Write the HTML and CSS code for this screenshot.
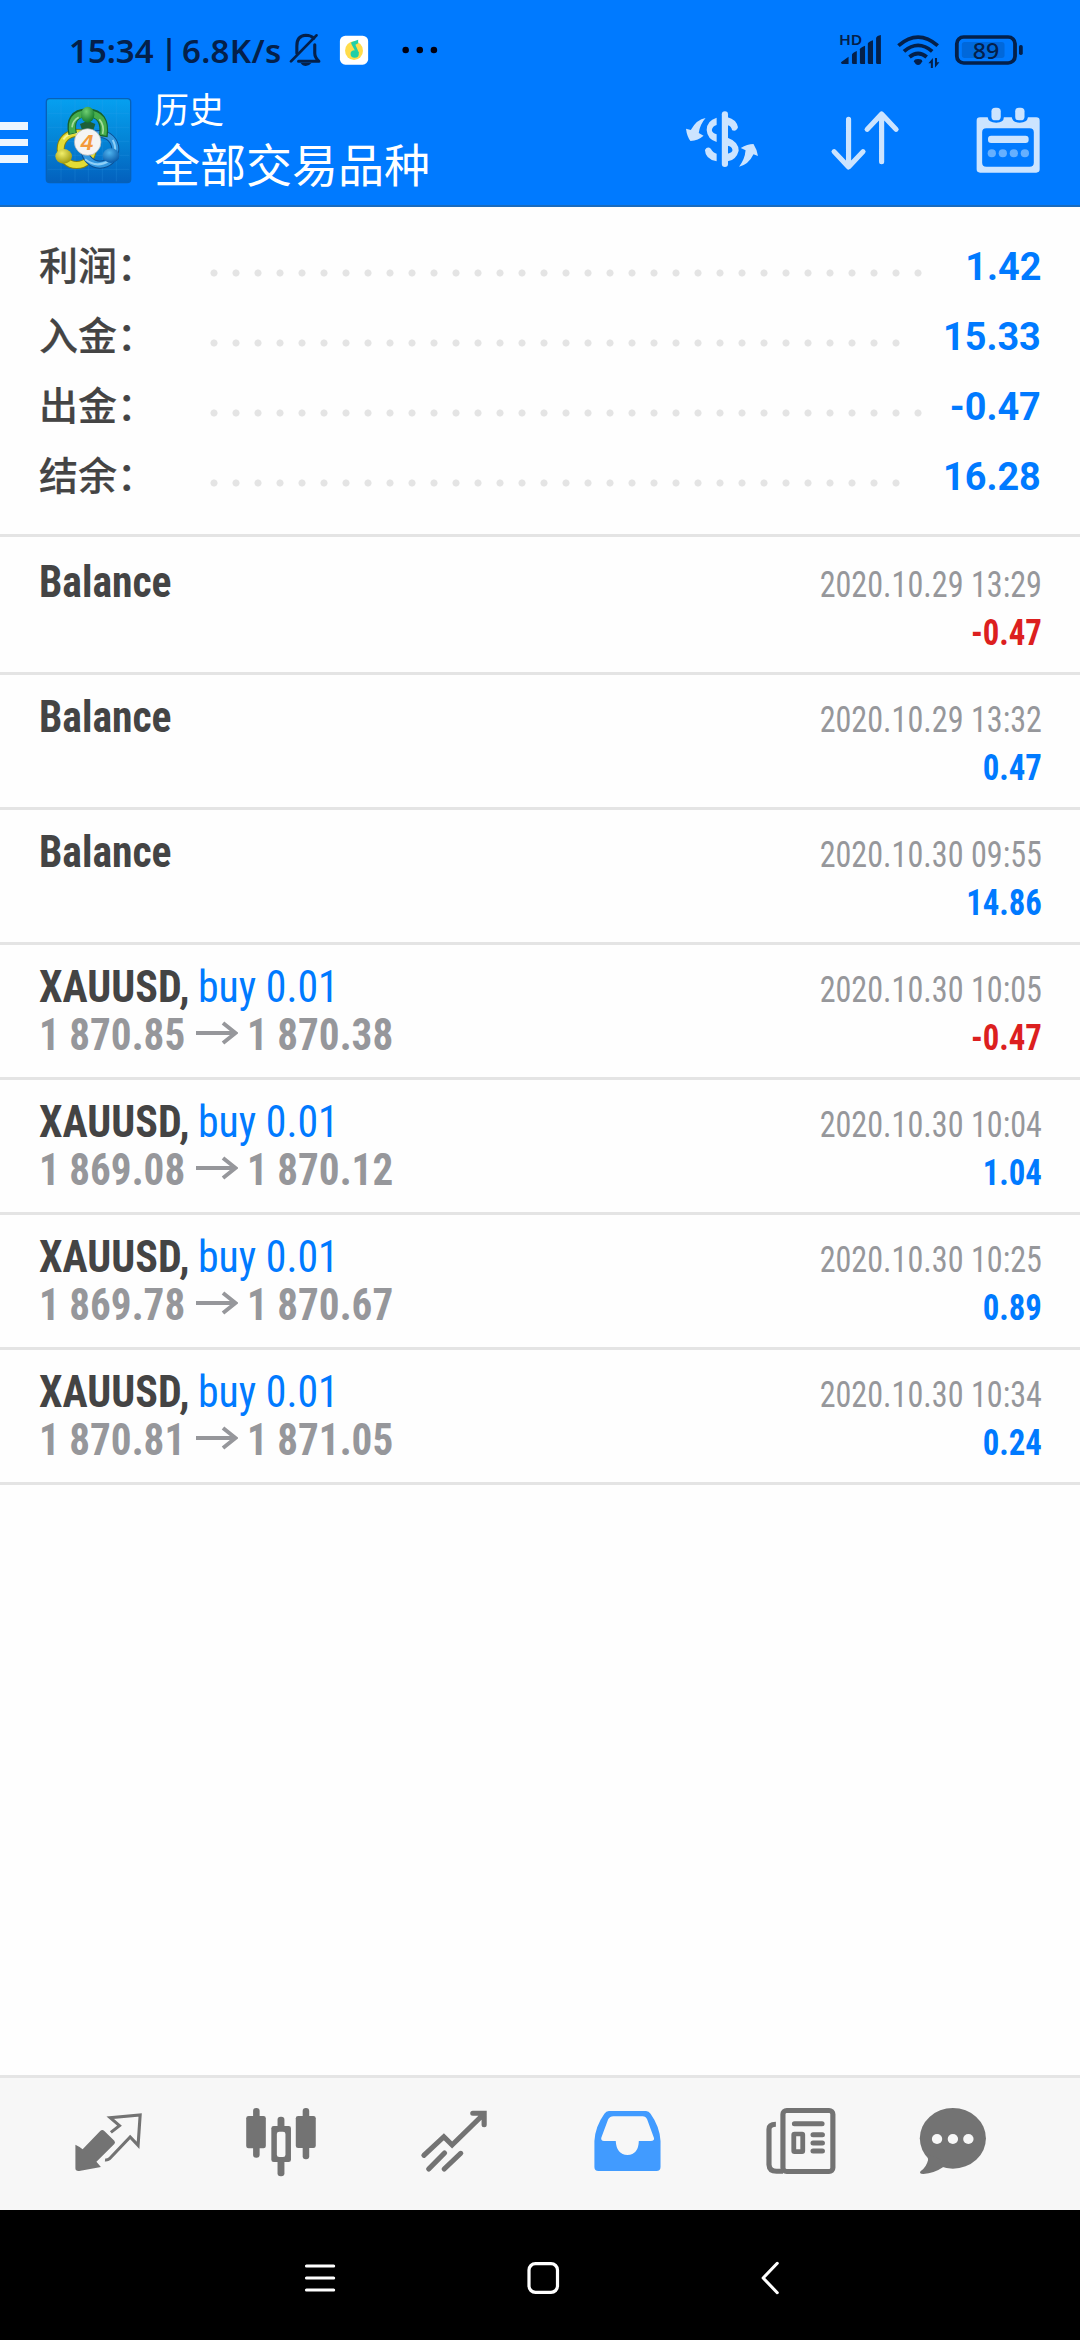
FILE: index.html
```html
<!DOCTYPE html>
<html lang="zh-CN">
<head>
<meta charset="utf-8">
<title>历史</title>
<link rel="stylesheet" href="styles.css">
</head>
<body>
<div class="screen">
  <header class="header">
    <div class="status">
      <div class="status-text"><span class="clock">15:34</span><span class="bar">|</span><span class="rate">6.8K/s</span></div>
      <svg class="status-left" viewBox="827.6 90 464.6 120" preserveAspectRatio="none">
        <g fill="none" stroke="#04204a" stroke-width="9" stroke-linecap="round" stroke-linejoin="round">
          <path d="M862 160V138Q862 107 888 106Q903 106 911 115"/>
          <path d="M845 184L919 106" stroke-width="8"/>
          <path d="M867 184H926Q914 172 914 160V134"/>
        </g>
        <path d="M873 189H904Q898 198 888 198Q878 198 873 189Z" fill="#04204a"/>
        <rect x="987" y="107" width="82" height="87" rx="16" fill="#fff"/>
        <ellipse cx="1028" cy="152" rx="26" ry="28" fill="#ffdc4a"/>
        <ellipse cx="1030" cy="162" rx="12" ry="11" fill="#1fcfa8"/>
        <path d="M1020 127L1040 119V130L1032 134L1042 158L1036 162L1020 131Z" fill="#1fcfa8"/>
        <g fill="#001"><ellipse cx="1178" cy="150" rx="9.500" ry="10"/><ellipse cx="1219" cy="150" rx="9.500" ry="10"/><ellipse cx="1260" cy="150" rx="9.500" ry="10"/></g>
      </svg>
      <svg class="status-right" viewBox="856.7 90 566.3 120" preserveAspectRatio="none">
        <g fill="#04204a">
          <text class="hd" x="868" y="135" textLength="68" lengthAdjust="spacingAndGlyphs">HD</text>
          <path d="M874 187L896 170V192H878Q874 192 874 187Z"/>
          <path d="M906 164Q906 160 920 153V192H910Q906 192 906 188Z"/>
          <path d="M929 148Q929 143 944 137V192H933Q929 192 929 188Z"/>
          <path d="M952 131Q953 126 967 121V192H956Q952 192 952 188Z"/>
          <path d="M976 114Q978 107 990 105V192H980Q976 192 976 188Z"/>
          <path d="M1098 177Q1110 177 1110 184Q1106 195 1098 195Q1090 195 1086 184Q1087 177 1098 177Z"/>
          <path d="M1128 190L1141 174V204H1135V190ZM1147 174H1153V187H1160L1147 203Z"/>
          <rect x="1391" y="135" width="11" height="30" rx="5"/>
        </g>
        <g fill="none" stroke="#04204a" stroke-width="11">
          <path d="M1041 137Q1098 86 1155 137"/>
          <path d="M1057 154Q1098 118 1139 154"/>
          <path d="M1073 171Q1098 150 1123 171"/>
          <rect x="1210.500" y="111" width="169" height="78" rx="20"/>
        </g>
        <rect x="1225" y="126" width="124" height="48" rx="8" fill="#0068db"/>
        <text class="batt" x="1257" y="176" textLength="77" lengthAdjust="spacingAndGlyphs" fill="#04204a">89</text>
      </svg>
    </div>
    <div class="appbar">
      <div class="burger"><i></i><i></i><i></i></div>
      <svg class="logo" viewBox="45 51 261 261">
        <defs>
          <linearGradient id="sky" x1="0" y1="0" x2="0" y2="1"><stop offset="0" stop-color="#06a0f0"/><stop offset=".5" stop-color="#0484d6"/><stop offset="1" stop-color="#0360bd"/></linearGradient>
          <radialGradient id="gr" cx=".4" cy=".3" r=".7"><stop offset="0" stop-color="#6fcf72"/><stop offset="1" stop-color="#137a2d"/></radialGradient>
          <radialGradient id="ye" cx=".4" cy=".3" r=".7"><stop offset="0" stop-color="#f1ee6a"/><stop offset="1" stop-color="#a09a10"/></radialGradient>
          <radialGradient id="bl" cx=".4" cy=".3" r=".7"><stop offset="0" stop-color="#4fb4ef"/><stop offset="1" stop-color="#0a5aa8"/></radialGradient>
        </defs>
        <rect x="49" y="56" width="253" height="252" rx="10" fill="url(#sky)" stroke="#0761b8" stroke-width="4"/>
        <path d="M93 60V304M135 60V304M175 60V304M217 60V304M259 60V304M53 100H298M53 142H298M53 184H298M53 226H298M53 268H298" stroke="#3aa6ea" stroke-opacity=".3" stroke-width="2"/>
        <g fill="none">
          <circle cx="140" cy="207" r="48" stroke="#85800f" stroke-width="24"/>
          <circle cx="140" cy="207" r="48" stroke="#e3dc35" stroke-width="18"/>
          <path d="M100 178Q120 152 150 162" stroke="#f7f490" stroke-width="6"/>
          <circle cx="210" cy="208" r="46" stroke="#0b4f93" stroke-width="24"/>
          <circle cx="210" cy="208" r="46" stroke="#3498e0" stroke-width="18"/>
          <path d="M165 238Q200 266 238 242M248 180Q257 196 255 210" stroke="#8fd0f7" stroke-width="6"/>
          <path d="M128 162Q114 100 172 98Q230 100 220 170" stroke="#17632a" stroke-width="26"/>
          <path d="M128 160Q116 102 172 100Q230 102 220 166" stroke="#46ad4c" stroke-width="19"/>
          <path d="M126 142Q128 122 146 112M208 118Q224 136 218 162" stroke="#a4dc9c" stroke-width="5"/>
        </g>
        <path d="M150 132L173 122L196 132L190 150H156Z" fill="#1d5f38"/>
        <ellipse cx="173" cy="104" rx="20" ry="24" fill="url(#gr)"/>
        <ellipse cx="101" cy="229" rx="25" ry="22" fill="url(#ye)"/>
        <ellipse cx="243" cy="227" rx="25" ry="22" fill="url(#bl)"/>
        <circle cx="173" cy="186" r="40" fill="#f4f4f4" stroke="#a9adb0" stroke-width="2"/>
        <text class="four" x="171" y="210" text-anchor="middle">4</text>
      </svg>
      <div class="titles"><div class="title">历史</div><div class="subtitle">全部交易品种</div></div>
      <div class="actions">
        <svg viewBox="412.4 294 232.3 240" preserveAspectRatio="none" fill="#cce4ff">
          <rect x="528" y="334" width="18" height="167" rx="9"/>
          <path d="M513 353Q484 362 484 390Q486 418 513 426V403Q499 398 499 390Q501 378 513 375Z"/>
          <path d="M479 450Q480 478 513 484V461Q502 458 496 446Q486 438 479 450Z"/>
          <path d="M545 352Q570 358 575 382Q570 396 558 391Q555 378 545 376Z"/>
          <path d="M545 413Q577 425 577 452Q570 480 545 484V461Q559 458 559 450Q557 438 545 437Z"/>
          <path d="M481 354Q455 358 438 390L424 386Q427 410 437 423Q460 421 475 407L461 399Q465 372 481 354Z"/>
          <path d="M578 500Q595 478 597 451L583 444Q602 432 620 432Q631 450 633 468L620 463Q605 495 578 500Z"/>
        </svg>
        <svg viewBox="827.6 294 232.3 240" preserveAspectRatio="none" fill="none" stroke="#cce4ff" stroke-width="15" stroke-linecap="round" stroke-linejoin="round">
          <path d="M896 358V500M854 455L896 501L938 455M992 485V343M950 388L992 342L1034 388"/>
        </svg>
        <svg viewBox="1242.9 294 232.3 240" preserveAspectRatio="none" fill="#cce4ff">
          <path fill-rule="evenodd" d="M1278 352H1300Q1302 368 1325 368Q1347 368 1347 352H1370Q1372 368 1393 368Q1415 368 1417 352H1441Q1451 352 1451 362V508Q1451 518 1441 518H1278Q1268 518 1268 508V362Q1268 352 1278 352ZM1296 385Q1284 385 1284 397V488Q1284 500 1296 500H1422Q1434 500 1434 488V397Q1434 385 1422 385Z"/>
          <rect x="1311" y="323" width="27" height="38" rx="11"/><rect x="1380" y="323" width="27" height="38" rx="11"/>
          <rect x="1301" y="407" width="118" height="22" rx="9"/>
          <g fill="#66b0ff"><circle cx="1312" cy="460" r="12"/><circle cx="1344" cy="460" r="12"/><circle cx="1376" cy="460" r="12"/><circle cx="1408" cy="460" r="12"/></g>
        </svg>
      </div>
    </div>
  </header>

  <section class="summary">
    <div class="sum-row"><span class="label">利润：</span><span class="dots"></span><span class="amount">1.42</span></div>
    <div class="sum-row"><span class="label">入金：</span><span class="dots short"></span><span class="amount">15.33</span></div>
    <div class="sum-row"><span class="label">出金：</span><span class="dots"></span><span class="amount">-0.47</span></div>
    <div class="sum-row"><span class="label">结余：</span><span class="dots short"></span><span class="amount">16.28</span></div>
  </section>

  <main class="list">
    <div class="item"><div class="left"><div class="line"><b class="op">Balance</b></div></div><div class="right"><div class="date">2020.10.29 13:29</div><div class="value loss">-0.47</div></div></div>
    <div class="item"><div class="left"><div class="line"><b class="op">Balance</b></div></div><div class="right"><div class="date">2020.10.29 13:32</div><div class="value">0.47</div></div></div>
    <div class="item"><div class="left"><div class="line"><b class="op">Balance</b></div></div><div class="right"><div class="date">2020.10.30 09:55</div><div class="value">14.86</div></div></div>
    <div class="item"><div class="left"><div class="line"><b class="symbol">XAUUSD,</b><span class="side">buy 0.01</span></div><div class="line prices"><span class="price">1 870.85</span><svg class="arrow" viewBox="0 0 42 24"><path d="M0 12H40M27 2L39.500 12L27 22"/></svg><span class="price">1 870.38</span></div></div><div class="right"><div class="date">2020.10.30 10:05</div><div class="value loss">-0.47</div></div></div>
    <div class="item"><div class="left"><div class="line"><b class="symbol">XAUUSD,</b><span class="side">buy 0.01</span></div><div class="line prices"><span class="price">1 869.08</span><svg class="arrow" viewBox="0 0 42 24"><path d="M0 12H40M27 2L39.500 12L27 22"/></svg><span class="price">1 870.12</span></div></div><div class="right"><div class="date">2020.10.30 10:04</div><div class="value">1.04</div></div></div>
    <div class="item"><div class="left"><div class="line"><b class="symbol">XAUUSD,</b><span class="side">buy 0.01</span></div><div class="line prices"><span class="price">1 869.78</span><svg class="arrow" viewBox="0 0 42 24"><path d="M0 12H40M27 2L39.500 12L27 22"/></svg><span class="price">1 870.67</span></div></div><div class="right"><div class="date">2020.10.30 10:25</div><div class="value">0.89</div></div></div>
    <div class="item"><div class="left"><div class="line"><b class="symbol">XAUUSD,</b><span class="side">buy 0.01</span></div><div class="line prices"><span class="price">1 870.81</span><svg class="arrow" viewBox="0 0 42 24"><path d="M0 12H40M27 2L39.500 12L27 22"/></svg><span class="price">1 871.05</span></div></div><div class="right"><div class="date">2020.10.30 10:34</div><div class="value">0.24</div></div></div>
  </main>

  <nav class="tabs">
    <svg viewBox="197.5 126 232.3 240" preserveAspectRatio="none">
      <path d="M219 254Q230 259 240 268L291 213Q297 207 303 213L332 242Q336 247 332 252L280 305L293 321L230 333Q219 334 219 325Z" fill="#737373"/>
      <path d="M322 217L347 197L320 173L407 165L401 256L378 231L318 296Q313 301 305 300" fill="none" stroke="#737373" stroke-width="9" stroke-linejoin="miter"/>
    </svg>
    <svg viewBox="699.9 126 232.3 240" preserveAspectRatio="none" fill="#737373">
      <rect x="735" y="144" width="19" height="149" rx="9"/><rect x="715" y="168" width="57" height="97" rx="7"/>
      <rect x="879" y="144" width="19" height="154" rx="9"/><rect x="859" y="168" width="58" height="96" rx="7"/>
      <rect x="806" y="170" width="20" height="179" rx="9"/><rect x="788" y="198" width="57" height="108" rx="7"/>
      <rect x="804" y="215" width="25" height="76" rx="7" fill="#f7f7f7"/>
    </svg>
    <svg viewBox="1202.3 126 232.3 240" preserveAspectRatio="none" fill="none" stroke="#737373" stroke-width="15" stroke-linecap="round">
      <path d="M1231 286L1289 230L1313 255L1405 162M1373 160H1406V194M1245 327L1291 279M1290 327L1338 280"/>
    </svg>
    <svg viewBox="136.5 126 232.3 240" preserveAspectRatio="none">
      <path fill="#419bff" fill-rule="evenodd" d="M200 153H308Q316 153 321 161Q348 200 350 243V321Q350 333 338 333H170Q158 333 158 321V243Q160 200 187 161Q192 153 200 153ZM213 169Q203 169 198 178L178 233Q176 242 186 243H220Q222 284 254 285Q286 284 287 243H322Q333 242 331 234L311 178Q307 169 298 169Z"/>
    </svg>
    <svg viewBox="638.9 126 232.3 240" preserveAspectRatio="none" fill="none" stroke="#737373" stroke-width="15">
      <rect x="705.500" y="151.500" width="145" height="183" rx="11"/>
      <path d="M685 193Q665 193 665 208V314Q666 334 687 334H706"/>
      <rect x="737" y="222" width="26" height="53" rx="2" stroke-width="14"/>
      <path d="M739 191H819M793 224H820M793 249H820M793 273H820" stroke-linecap="round"/>
    </svg>
    <svg class="last" viewBox="1083.2 126 232.3 240" preserveAspectRatio="none">
      <g fill="#737373"><ellipse cx="1199" cy="235" rx="96" ry="91"/><path d="M1120 280Q1127 290 1127 300Q1122 322 1105 334Q1100 342 1113 342Q1145 340 1170 322L1190 310Z"/></g>
      <g fill="#f7f7f7"><circle cx="1153" cy="237" r="15"/><circle cx="1199" cy="237" r="15"/><circle cx="1244" cy="237" r="15"/></g>
    </svg>
  </nav>

  <footer class="sysnav">
    <svg viewBox="871.2 594 116.2 120" preserveAspectRatio="none"><path d="M890 618H969M890 654H969M890 690H969"/></svg>
    <svg viewBox="523 2258 40 40"><rect class="thin" x="529" y="2263.600" width="28.500" height="28.800" rx="6.500"/></svg>
    <svg viewBox="598.2 594 116.2 120" preserveAspectRatio="none"><path d="M689 610L648 654L689 698"/></svg>
  </footer>
</div>
</body>
</html>
```
FILE: styles.css
```css
* { box-sizing: border-box; }
body { margin: 0; background: #fff; }
svg { display: block; flex: none; }

.screen {
  width: 1080px;
  height: 2340px;
  display: flex;
  flex-direction: column;
  overflow: hidden;
  background: #fefefe;
  font-family: Roboto, "Noto Sans CJK SC", sans-serif;
}

/* header */
.header {
  flex: none;
  height: 207px;
  background: #007aff;
  border-bottom: 2px solid #1a6bbd;
}
.status {
  height: 90px;
  display: flex;
  padding: 30px 50px 0 69px;
}
.status-text {
  width: 216px;
  display: flex;
  font: 600 33px/42px "Noto Sans", sans-serif;
  color: #04204a;
  white-space: nowrap;
}
.clock { width: 91px; }
.bar { width: 22px; }
.rate { letter-spacing: .3px; }
.status-left { width: 160px; height: 40px; }
.status-right { width: 195px; height: 40px; margin-left: auto; }
.hd { font: 600 44px "Noto Sans", sans-serif; }
.batt { font: 500 67px "Noto Sans", sans-serif; }
.four { font: italic 700 68px "Liberation Sans", sans-serif; fill: #f39a3c; }

.appbar { display: flex; height: 115px; }
.burger {
  width: 28px;
  margin-right: 17px;
  padding-top: 32px;
  display: flex;
  flex-direction: column;
  gap: 9px;
}
.burger i { height: 7.600px; background: #ecf6ff; }
.logo { width: 87px; height: 87px; margin-top: 7px; }
.titles {
  margin-left: 22px;
  color: #fff;
  font-family: "Noto Sans CJK SC", sans-serif;
  font-weight: 400;
  white-space: nowrap;
}
.title { font-size: 35px; line-height: 40px; margin-top: -2px; }
.subtitle { font-size: 46px; line-height: 56px; margin-top: 6px; }
.actions {
  margin-left: auto;
  padding: 8px 32px 0 0;
  display: flex;
  gap: 63px;
}
.actions svg { width: 80px; height: 80px; }

/* account summary */
.summary {
  flex: none;
  height: 330px;
  padding: 25px 39px 0;
  border-bottom: 3px solid #e4e4e4;
}
.sum-row {
  height: 70px;
  display: flex;
  align-items: center;
  font-size: 39px;
  line-height: 70px;
}
.label {
  width: 163.500px;
  align-self: flex-start;
  line-height: 62px;
  color: #444;
  font-family: "Noto Sans CJK SC", sans-serif;
  font-weight: 500;
  -webkit-text-stroke: .2px #444;
}
.dots {
  width: 726px;
  height: 8px;
  margin-top: 12px;
  background: radial-gradient(circle, #e4e4e4 3.200px, transparent 3.900px) 0 0 / 22px 8px repeat-x;
}
.dots.short { width: 704px; }
.amount {
  margin-left: auto;
  font-weight: 700;
  color: #007aff;
  transform: scaleX(.97);
  transform-origin: right;
}

/* history */
.list { flex: 1; padding-top: 3px; }
.item {
  height: 135px;
  display: flex;
  justify-content: space-between;
  padding: 0 38px 0 39px;
  border-bottom: 3px solid #e4e4e4;
  white-space: nowrap;
  font-stretch: 75%;
}
.left { padding-top: 18px; font-size: 44px; line-height: 48px; color: #444; }
.line { height: 48px; display: flex; }
.op, .symbol, .side, .price { transform-origin: left; }
.op { transform: scaleX(.945); }
.symbol { width: 158.500px; transform: scaleX(.955); }
.side { color: #007aff; transform: scaleX(.95); }
.prices { color: #96979b; font-weight: 700; }
.price { width: 157px; transform: scaleX(.935); }
.arrow { width: 42px; height: 24px; margin: 10px 9px 0 0; }
.arrow path { fill: none; stroke: #96979b; stroke-width: 4; }
.right { padding-top: 21px; font-size: 36px; line-height: 48px; text-align: right; }
.date, .value { transform-origin: right; }
.date { color: #96979b; transform: scaleX(.893); }
.value { color: #007aff; font-weight: 700; transform: scaleX(.91); }
.value.loss { color: #dc1f1f; }

/* bottom tabs */
.tabs {
  flex: none;
  height: 135px;
  display: flex;
  gap: 93px;
  padding: 24px 0 0 68px;
  background: #f7f7f7;
  border-top: 3px solid #e5e5e5;
}
.tabs svg { width: 80px; height: 80px; }
.tabs .last { margin-left: -20px; }

.sysnav {
  flex: none;
  height: 130px;
  display: flex;
  gap: 183px;
  padding: 48px 0 0 300px;
  background: #000;
}
.sysnav svg { width: 40px; height: 40px; fill: none; stroke: #fff; stroke-width: 9; stroke-linecap: round; stroke-linejoin: round; }
.sysnav .thin { stroke-width: 3.200; }
```
